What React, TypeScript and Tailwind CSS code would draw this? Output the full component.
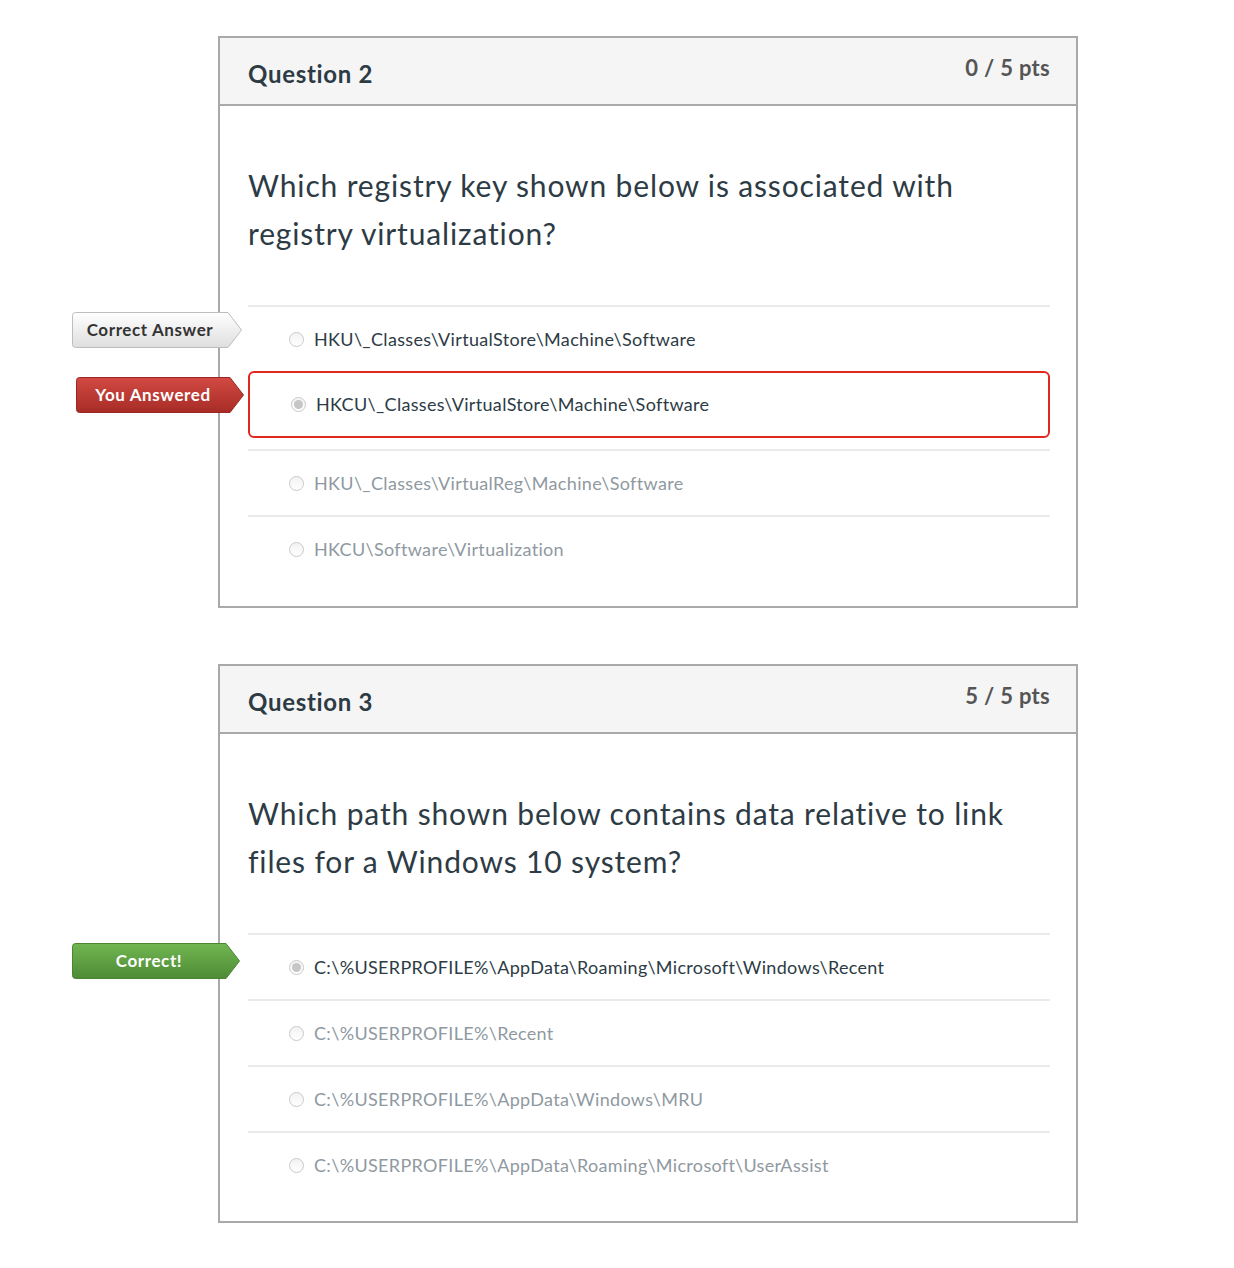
import type { ReactNode } from 'react'

type TagTone = 'neutral' | 'wrong' | 'right'

const tagStyles: Record<TagTone, { top: string; bottom: string; stroke: string; text: string }> = {
  neutral: { top: '#ffffff', bottom: '#dedede', stroke: '#bdbdbd', text: 'text-[#333333]' },
  wrong: { top: '#d24a43', bottom: '#a72c26', stroke: '#9c2722', text: 'text-white' },
  right: { top: '#71b652', bottom: '#4e8b35', stroke: '#4a8532', text: 'text-white' },
}

function AnswerTag({ tone, width, children }: { tone: TagTone; width: number; children: ReactNode }) {
  const s = tagStyles[tone]
  const id = `tag-${tone}`
  const w = width
  return (
    <div className="relative h-[36px]" style={{ width: w }}>
      <svg className="absolute inset-0" width={w} height={36} viewBox={`0 0 ${w} 36`}>
        <defs>
          <linearGradient id={id} x1="0" y1="0" x2="0" y2="1">
            <stop offset="0" stopColor={s.top} />
            <stop offset="1" stopColor={s.bottom} />
          </linearGradient>
        </defs>
        <path
          d={`M3.5 0.5 H${w - 14} L${w - 0.5} 18 L${w - 14} 35.5 H3.5 Q0.5 35.5 0.5 32.5 V3.5 Q0.5 0.5 3.5 0.5 Z`}
          fill={`url(#${id})`}
          stroke={s.stroke}
          strokeWidth="1"
        />
      </svg>
      <span
        className={`relative flex h-full items-center justify-center pr-[14px] text-[17px] font-bold tracking-[0.6px] ${s.text}`}
      >
        {children}
      </span>
    </div>
  )
}

function Radio({ checked }: { checked?: boolean }) {
  return (
    <span className="flex h-[15px] w-[15px] shrink-0 items-center justify-center rounded-full border border-[#c9c9c9] bg-gradient-to-b from-[#f2f2f2] to-white">
      {checked ? <span className="h-[9px] w-[9px] rounded-full bg-[#c6c6c6]" /> : null}
    </span>
  )
}

type Answer = {
  text: string
  state: 'plain' | 'selected-wrong' | 'faded' | 'selected-right'
  tag?: { tone: TagTone; label: string; left: number; top: number; width: number }
}

function AnswerRow({ answer }: { answer: Answer }) {
  const tag = answer.tag ? (
    <div className="absolute" style={{ left: answer.tag.left, top: answer.tag.top }}>
      <AnswerTag tone={answer.tag.tone} width={answer.tag.width}>
        {answer.tag.label}
      </AnswerTag>
    </div>
  ) : null

  if (answer.state === 'selected-wrong') {
    return (
      <div className="relative mb-[11px]">
        {tag}
        <div className="flex h-[67px] items-center gap-[10px] rounded-md border-2 border-[#e0281c] pl-[41px]">
          <Radio checked />
          <span className="text-[18px] tracking-[0.33px] text-[#2d3b45]">{answer.text}</span>
        </div>
      </div>
    )
  }

  const faded = answer.state === 'faded'
  return (
    <div className="relative border-t-2 border-[#ebebeb]">
      {tag}
      <div className="flex h-[64px] items-center gap-[10px] pl-[41px]">
        <Radio checked={answer.state === 'selected-right'} />
        <span
          className={`text-[18px] tracking-[0.33px] ${faded ? 'text-[#8f999f]' : 'text-[#2d3b45]'}`}
        >
          {answer.text}
        </span>
      </div>
    </div>
  )
}

function QuestionCard({
  title,
  points,
  prompt,
  answers,
  lastPad,
}: {
  title: string
  points: string
  prompt: ReactNode
  answers: Answer[]
  lastPad: string
}) {
  return (
    <section className="w-[860px] border-2 border-[#a9a9a9] bg-white">
      <header className="flex h-[68px] items-start justify-between border-b-2 border-[#a9a9a9] bg-[#f5f5f5] pr-[26px] pl-[28px]">
        <h2 className="pt-[21px] text-[24px] leading-[30px] font-bold tracking-[0.7px] text-[#2d3b45]">
          {title}
        </h2>
        <span className="pt-[16px] text-[22px] leading-[28px] font-bold tracking-[0.3px] text-[#555555]">
          {points}
        </span>
      </header>
      <div className={`pr-[26px] pl-[28px] pt-[55px] ${lastPad}`}>
        <p className="mb-[48px] text-[30px] leading-[48px] tracking-[0.85px] text-[#2d3b45]">
          {prompt}
        </p>
        <div>
          {answers.map((a) => (
            <AnswerRow key={a.text} answer={a} />
          ))}
        </div>
      </div>
    </section>
  )
}

export default function App() {
  return (
    <div className="min-h-[1268px] bg-white pt-[36px] pl-[218px] font-['Lato','Noto_Sans',sans-serif]">
      <QuestionCard
        title="Question 2"
        points="0 / 5 pts"
        lastPad="pb-[25px]"
        prompt={
          <>
            Which registry key shown below is associated with
            <br />
            registry virtualization?
          </>
        }
        answers={[
          {
            text: 'HKU\\_Classes\\VirtualStore\\Machine\\Software',
            state: 'plain',
            tag: { tone: 'neutral', label: 'Correct Answer', left: -176, top: 5, width: 170 },
          },
          {
            text: 'HKCU\\_Classes\\VirtualStore\\Machine\\Software',
            state: 'selected-wrong',
            tag: { tone: 'wrong', label: 'You Answered', left: -172, top: 6, width: 168 },
          },
          { text: 'HKU\\_Classes\\VirtualReg\\Machine\\Software', state: 'faded' },
          { text: 'HKCU\\Software\\Virtualization', state: 'faded' },
        ]}
      />
      <div className="h-[56px]" />
      <QuestionCard
        title="Question 3"
        points="5 / 5 pts"
        lastPad="pb-[24px]"
        prompt={
          <>
            Which path shown below contains data relative to link
            <br />
            files for a Windows 10 system?
          </>
        }
        answers={[
          {
            text: 'C:\\%USERPROFILE%\\AppData\\Roaming\\Microsoft\\Windows\\Recent',
            state: 'selected-right',
            tag: { tone: 'right', label: 'Correct!', left: -176, top: 8, width: 168 },
          },
          { text: 'C:\\%USERPROFILE%\\Recent', state: 'faded' },
          { text: 'C:\\%USERPROFILE%\\AppData\\Windows\\MRU', state: 'faded' },
          { text: 'C:\\%USERPROFILE%\\AppData\\Roaming\\Microsoft\\UserAssist', state: 'faded' },
        ]}
      />
    </div>
  )
}
